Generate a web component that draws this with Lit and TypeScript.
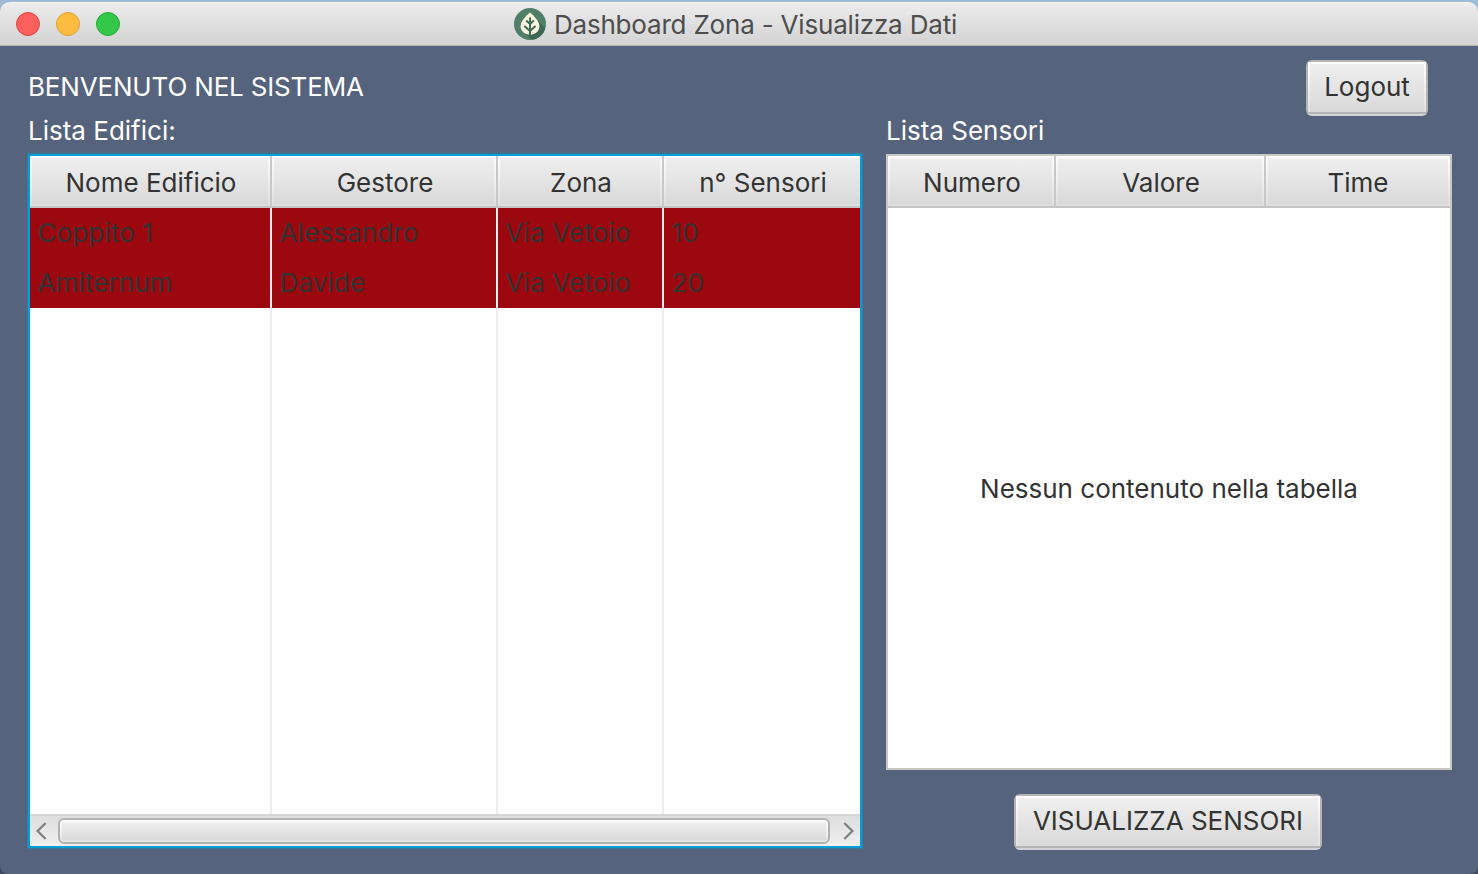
import { LitElement, html, css, svg } from "lit";
import { customElement, property } from "lit/decorators.js";

interface Column {
  label: string;
  width: number;
}

const BUILDING_COLUMNS: Column[] = [
  { label: "Nome Edificio", width: 242 },
  { label: "Gestore", width: 226 },
  { label: "Zona", width: 166 },
  { label: "n° Sensori", width: 196 },
];

const SENSOR_COLUMNS: Column[] = [
  { label: "Numero", width: 168 },
  { label: "Valore", width: 210 },
  { label: "Time", width: 184 },
];

const BUILDINGS: string[][] = [
  ["Coppito 1", "Alessandro", "Via Vetoio", "10"],
  ["Amiternum", "Davide", "Via Vetoio", "20"],
];

@customElement("data-table")
export class DataTable extends LitElement {
  @property({ attribute: false }) columns: Column[] = [];
  @property({ attribute: false }) rows: string[][] = [];
  @property({ type: Boolean, reflect: true }) focused = false;
  @property({ type: Boolean }) scrollable = false;
  @property() placeholder = "";

  static styles = css`
    :host {
      display: flex;
      flex-direction: column;
      box-sizing: border-box;
      border: 2px solid #c8c8c8;
      background: #fff;
      color: #333;
    }
    :host([focused]) {
      border-color: #039ed3;
      box-shadow: 0 0 1px 1px rgba(3, 158, 211, 0.35);
    }
    .header,
    .row,
    .filler {
      display: grid;
    }
    .header {
      height: 52px;
      flex: none;
    }
    .head {
      box-sizing: border-box;
      display: flex;
      align-items: center;
      justify-content: center;
      border-right: 2px solid #c8c8c8;
      border-bottom: 2px solid #c4c4c4;
      background:
        linear-gradient(#efefef, #d9d9d9) 2px 2px / calc(100% - 4px) calc(100% - 4px) no-repeat,
        linear-gradient(#ffffff, #dfdfdf);
      padding-top: 4px;
      padding-left: 2px;
    }
    :host([focused]) .head:last-child {
      border-right: 0;
      background:
        linear-gradient(#efefef, #d9d9d9) 2px 2px / 100% calc(100% - 4px) no-repeat,
        linear-gradient(#ffffff, #dfdfdf);
    }
    :host(:not([focused])) .head:last-child {
      border-right: 0;
      padding-left: 0;
    }
    .row {
      height: 50px;
      background: #9c0810;
      letter-spacing: 0.12px;
    }
    .cell {
      display: flex;
      align-items: center;
      padding-left: 7.5px;
      border-right: 2px solid #ededed;
    }
    .cell:last-child {
      border-right: 0;
    }
    .filler {
      flex: 1;
    }
    .empty {
      flex: 1;
      display: flex;
      align-items: center;
      justify-content: center;
      padding-top: 2px;
    }
    .scrollbar {
      flex: none;
      box-sizing: border-box;
      height: 32px;
      border-top: 2px solid #d5d5d5;
      display: flex;
      align-items: center;
      background: linear-gradient(#dedede, #efefef);
    }
    .arrow {
      width: 28px;
      height: 26px;
      flex: none;
    }
    .arrow.end {
      width: 30px;
    }
    .thumb {
      flex: 1;
      height: 26px;
      box-sizing: border-box;
      border: 2px solid #b2b2b2;
      border-radius: 6px;
      background:
        linear-gradient(#efefef, #dadada) 2px 2px / calc(100% - 4px) calc(100% - 4px) no-repeat,
        linear-gradient(#ffffff, #e2e2e2);
      background-origin: padding-box;
    }
    .stroke {
      fill: none;
      stroke: #808080;
      stroke-width: 2.3;
    }
  `;

  render() {
    const tracks = `grid-template-columns:${this.columns.map((c) => `${c.width}px`).join(" ")}`;
    return html`
      <div class="header" style=${tracks}>
        ${this.columns.map((c) => html`<div class="head">${c.label}</div>`)}
      </div>
      ${this.rows.map(
        (r) => html`<div class="row" style=${tracks}>
          ${r.map((v) => html`<div class="cell">${v}</div>`)}
        </div>`
      )}
      ${this.placeholder
        ? html`<div class="empty">${this.placeholder}</div>`
        : html`<div class="filler" style=${tracks}>
            ${this.columns.map(() => html`<div class="cell"></div>`)}
          </div>`}
      ${this.scrollable
        ? html`<div class="scrollbar">
            <svg class="arrow" viewBox="0 0 28 26">${svg`<path class="stroke" d="M15.7 5 L7.6 13 L15.7 21"/>`}</svg>
            <div class="thumb"></div>
            <svg class="arrow end" viewBox="0 0 30 26">${svg`<path class="stroke" d="M14.3 5 L22.4 13 L14.3 21"/>`}</svg>
          </div>`
        : null}
    `;
  }
}

@customElement("app-root")
export class AppRoot extends LitElement {
  static styles = css`
    :host {
      display: flex;
      flex-direction: column;
      box-sizing: border-box;
      width: 1478px;
      height: 874px;
      padding-top: 2px;
      overflow: hidden;
      background: linear-gradient(#9dbbd3 0, #9dbbd3 30px, #3f4a5f 31px);
      font-family: Inter, "Liberation Sans", sans-serif;
      font-size: 26px;
      line-height: 32px;
      letter-spacing: 0;
      white-space: nowrap;
      color: #fff;
    }
    .titlebar {
      flex: none;
      box-sizing: border-box;
      height: 44px;
      display: grid;
      grid-template-columns: 1fr auto 1fr;
      align-items: center;
      border-top: 1px solid #f8f8f8;
      border-bottom: 1px solid #b4b4b4;
      border-radius: 10px 10px 0 0;
      background: linear-gradient(#ececec, #d3d3d3);
      color: #4d4d4d;
    }
    .lights {
      display: flex;
      gap: 16px;
      padding-left: 16px;
    }
    .light {
      box-sizing: border-box;
      width: 24px;
      height: 24px;
      border-radius: 50%;
    }
    .close {
      background: #fc605c;
      border: 1px solid #e2463f;
    }
    .minimize {
      background: #fdbc40;
      border: 1px solid #dfa032;
    }
    .zoom {
      background: #34c84a;
      border: 1px solid #24ab35;
    }
    .title {
      display: flex;
      align-items: center;
      gap: 8px;
      padding-right: 7px;
      letter-spacing: -0.19px;
    }
    .title span {
      padding-top: 2px;
    }
    .logo {
      width: 32px;
      height: 32px;
    }
    .content {
      flex: 1;
      display: grid;
      grid-template-columns: 834px 566px;
      column-gap: 24px;
      padding: 14px 26px 24px 28px;
      border-radius: 0 0 8px 8px;
      background: #56637d;
    }
    .pane {
      display: flex;
      flex-direction: column;
    }
    .line {
      box-sizing: border-box;
      height: 56px;
      display: flex;
      flex: none;
      justify-content: flex-end;
      padding-right: 24px;
    }
    .welcome {
      justify-content: flex-start;
      align-items: center;
      padding-bottom: 2px;
      letter-spacing: -0.17px;
    }
    .label {
      height: 38px;
      line-height: 30px;
      flex: none;
    }
    .left-table {
      height: 694px;
    }
    .right-table {
      height: 616px;
      margin-bottom: 24px;
    }
    .button {
      box-sizing: border-box;
      height: 56px;
      padding: 0 0 2px;
      font: inherit;
      letter-spacing: inherit;
      color: #333;
      border: 0;
      border-radius: 6px;
      background:
        linear-gradient(#efefef, #d9d9d9) 4px 4px / calc(100% - 8px) 48px no-repeat,
        linear-gradient(#ffffff, #e0e0e0) 2px 2px / calc(100% - 4px) 50px no-repeat,
        linear-gradient(#b4b4b4 54px, #d3d5d9 54px);
    }
    .logout {
      width: 122px;
    }
    .show {
      width: 308px;
      align-self: center;
      margin-right: 2px;
    }
  `;

  render() {
    return html`
      <div class="titlebar">
        <div class="lights">
          <span class="light close"></span>
          <span class="light minimize"></span>
          <span class="light zoom"></span>
        </div>
        <div class="title">
          <svg class="logo" viewBox="0 0 32 32">
            <circle cx="16" cy="16" r="16" fill="#4f7f68" />
            <path d="M20 8 L31.2 20.5 A16 16 0 0 1 18 31.8 L11 25Z" fill="#3d6653" />
            <path
              d="M16 4.6 C20 8 25.4 13.2 25.4 18.2 C25.4 23.2 21.5 26.2 16 26.8 C10.5 26.2 6.6 23.2 6.6 18.2 C6.6 13.2 12 8 16 4.6Z"
              fill="#fbf3dc"
            />
            <path
              d="M16 9.5 V28 M16 16 L12.2 12.6 M16 16 L19.8 12.6 M16 23 L10.4 18 M16 23 L21.6 18"
              fill="none"
              stroke="#3f6d57"
              stroke-width="2"
            />
          </svg>
          <span>Dashboard Zona - Visualizza Dati</span>
        </div>
      </div>
      <div class="content">
        <div class="pane">
          <div class="line welcome"><span>BENVENUTO NEL SISTEMA</span></div>
          <div class="label">Lista Edifici:</div>
          <data-table
            class="left-table"
            focused
            scrollable
            .columns=${BUILDING_COLUMNS}
            .rows=${BUILDINGS}
          ></data-table>
        </div>
        <div class="pane">
          <div class="line"><button class="button logout">Logout</button></div>
          <div class="label">Lista Sensori</div>
          <data-table
            class="right-table"
            .columns=${SENSOR_COLUMNS}
            placeholder="Nessun contenuto nella tabella"
          ></data-table>
          <button class="button show">VISUALIZZA SENSORI</button>
        </div>
      </div>
    `;
  }
}
